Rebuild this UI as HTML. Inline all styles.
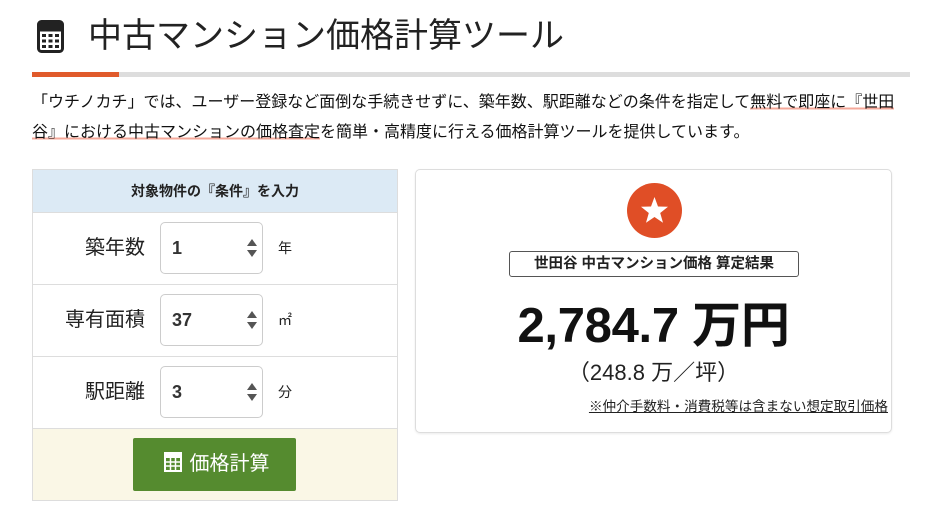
<!DOCTYPE html>
<html><head><meta charset="utf-8"><style>
*{margin:0;padding:0;box-sizing:border-box}
body{width:940px;height:515px;background:#fff;font-family:"Liberation Sans","Noto Sans CJK JP",sans-serif;color:#222;position:relative;overflow:hidden}
.abs{position:absolute}
h1{position:absolute;left:88px;top:14px;font-size:34px;font-weight:normal;line-height:44px;color:#222;white-space:nowrap}
.bar{left:32px;top:72px;width:878px;height:5px;background:#ddd}
.bar i{position:absolute;left:0;top:0;width:87px;height:5px;background:#e05a2b}
.p{left:32px;top:88px;width:880px;font-size:16px;line-height:30px;white-space:nowrap;color:#111}
.u{background:linear-gradient(transparent 80%,#f4a89a 80%,#f4a89a 90%,transparent 90%)}
.lp{left:32px;top:169px;width:366px;height:332px;border:1px solid #ddd}
.hd{height:43px;background:#dceaf5;text-align:center;font-weight:bold;font-size:14px;line-height:43px;border-bottom:1px solid #ddd}
.row{height:72px;border-bottom:1px solid #ddd;position:relative}
.lab{position:absolute;right:252px;top:0;line-height:70px;font-size:20px;white-space:nowrap}
.inp{position:absolute;left:127px;top:9px;width:103px;height:52px;border:1px solid #ccc;border-radius:5px;font-weight:bold;font-size:18px;line-height:50px;padding-left:11px;color:#333}
.inp b{position:absolute;right:5px;top:16px;width:0;height:0;border-left:5px solid transparent;border-right:5px solid transparent;border-bottom:7px solid #555}
.inp s{position:absolute;right:5px;top:27px;width:0;height:0;border-left:5px solid transparent;border-right:5px solid transparent;border-top:7px solid #555}
.unit{position:absolute;left:245px;top:0;line-height:70px;font-size:14px}
.ft{height:71px;background:#faf7e6;position:relative}
.btn{position:absolute;left:100px;top:9px;width:163px;height:53px;background:#558b2f;border-radius:2px;color:#fff;font-size:20px;line-height:53px;text-align:center;padding-left:4px}
.rp{left:415px;top:169px;width:477px;height:264px;border:1px solid #ddd;border-radius:5px;box-shadow:0 1px 2px rgba(0,0,0,.08)}
.circ{left:627px;top:183px;width:55px;height:55px;border-radius:50%;background:#e04e26}
.tag{left:509px;top:251px;width:290px;height:26px;border:1px solid #555;border-radius:3px;text-align:center;font-size:14.5px;font-weight:bold;line-height:24px}
.price{left:415px;top:295px;width:477px;text-align:center;font-size:49px;font-weight:bold;line-height:62px;letter-spacing:-0.3px;color:#111}
.sub{left:415px;top:358px;width:477px;text-align:center;font-size:22px;line-height:30px}
.note{right:52px;top:397px;font-size:13.6px;text-decoration:underline;line-height:20px;white-space:nowrap}
</style></head><body>
<svg class="abs" style="left:37px;top:20px" width="27" height="33" viewBox="0 0 27 33">
<rect x="1.5" y="1.5" width="24" height="30" rx="3" fill="none" stroke="#222" stroke-width="3"/>
<rect x="1.5" y="1.5" width="24" height="10" fill="#222"/>
<g fill="#222"><rect x="5" y="14" width="4" height="3"/><rect x="11.5" y="14" width="4" height="3"/><rect x="18" y="14" width="4" height="3"/>
<rect x="5" y="19.5" width="4" height="3"/><rect x="11.5" y="19.5" width="4" height="3"/><rect x="18" y="19.5" width="4" height="3"/>
<rect x="5" y="25" width="4" height="3"/><rect x="11.5" y="25" width="4" height="3"/><rect x="18" y="25" width="4" height="3"/></g></svg>
<h1>中古マンション価格計算ツール</h1>
<div class="abs bar"><i></i></div>
<div class="abs p">「ウチノカチ」では、ユーザー登録など面倒な手続きせずに、築年数、駅距離などの条件を指定して<span class="u">無料で即座に『世田</span><br><span class="u">谷』における中古マンションの価格査定</span>を簡単・高精度に行える価格計算ツールを提供しています。</div>
<div class="abs lp">
<div class="hd">対象物件の『条件』を入力</div>
<div class="row"><span class="lab">築年数</span><div class="inp">1<b></b><s></s></div><span class="unit">年</span></div>
<div class="row"><span class="lab">専有面積</span><div class="inp">37<b></b><s></s></div><span class="unit">㎡</span></div>
<div class="row"><span class="lab">駅距離</span><div class="inp">3<b></b><s></s></div><span class="unit">分</span></div>
<div class="ft"><div class="btn"><svg width="18" height="20" viewBox="0 0 18 20" style="vertical-align:-2px;margin-right:8px"><rect x="1" y="1" width="16" height="18" fill="none" stroke="#fff" stroke-width="2"/><rect x="1" y="1" width="16" height="5" fill="#fff"/><g stroke="#fff" stroke-width="1.5"><line x1="1" y1="10" x2="17" y2="10"/><line x1="1" y1="14" x2="17" y2="14"/><line x1="6.5" y1="6" x2="6.5" y2="19"/><line x1="11.5" y1="6" x2="11.5" y2="19"/></g></svg>価格計算</div></div>
</div>
<div class="abs rp"></div>
<div class="abs circ"><svg width="55" height="55" viewBox="0 0 55 55"><polygon fill="#fff" points="27.5,14 31,23.5 41,23.8 33.2,30 36,39.8 27.5,34 19,39.8 21.8,30 14,23.8 24,23.5"/></svg></div>
<div class="abs tag">世田谷 中古マンション価格 算定結果</div>
<div class="abs price">2,784.7 万円</div>
<div class="abs sub">（248.8 万／坪）</div>
<div class="abs note">※仲介手数料・消費税等は含まない想定取引価格</div>
</body></html>
